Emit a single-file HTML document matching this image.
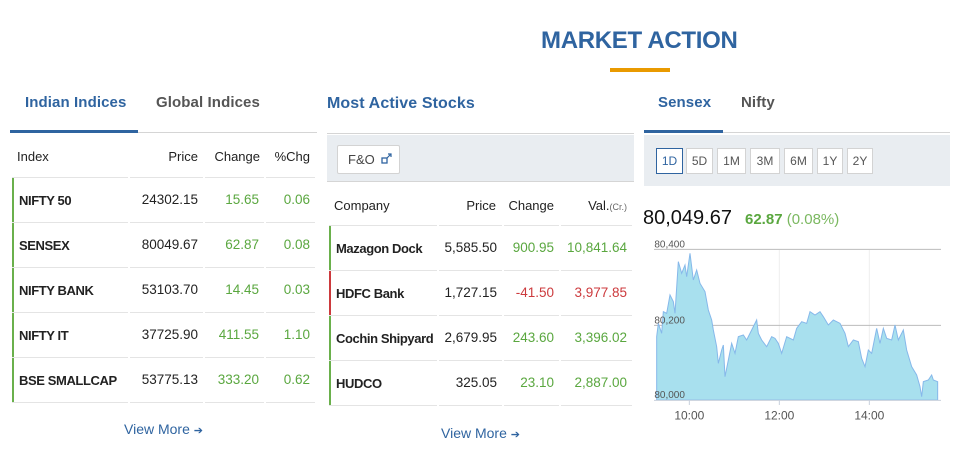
<!DOCTYPE html>
<html><head><meta charset="utf-8"><style>
*{margin:0;padding:0;box-sizing:border-box}
body{width:961px;height:454px;background:#fff;font-family:"Liberation Sans",sans-serif;position:relative;overflow:hidden;color:#222}
.a{position:absolute;white-space:nowrap}
.t{font-size:15px;font-weight:bold;letter-spacing:0.1px}
.bl{color:#2f64a0}
.gy{color:#555}
.h{font-size:13px;color:#222;top:0}
.ln{position:absolute;height:1px;background:#e4e4e4}
.g{color:#5aa73f}.r{color:#cc3a3d}
.n{font-size:13px;font-weight:bold;letter-spacing:-0.4px;color:#222}
.v{font-size:13.5px}
.bar{position:absolute;width:2px}
.btn{position:absolute;top:148px;height:26px;border:1px solid #d3d3d3;background:#fff;font-size:12px;color:#555;text-align:center;line-height:24px}
</style></head><body>
<div class="a bl" style="left:541px;top:27px;font-size:24px;font-weight:bold;letter-spacing:-0.3px">MARKET ACTION</div>
<div class="a" style="left:610px;top:68px;width:60px;height:4px;background:#e99a00"></div>

<div class="a t bl" style="left:25px;top:94px">Indian Indices</div>
<div class="a t gy" style="left:156px;top:94px">Global Indices</div>
<div class="a" style="left:10px;top:132px;width:307px;height:1px;background:#d5d5d5"></div>
<div class="a" style="left:10px;top:130px;width:128px;height:3px;background:#2f64a0"></div>
<div class="a h" style="left:17px;top:149px">Index</div>
<div class="a h" style="left:130px;width:68px;text-align:right;top:149px">Price</div>
<div class="a h" style="left:205px;width:55px;text-align:right;top:149px">Change</div>
<div class="a h" style="left:266px;width:44px;text-align:right;top:149px">%Chg</div>
<div id="L"></div>

<div class="a t bl" style="left:327px;top:95px;font-size:16px">Most Active Stocks</div>
<div class="a" style="left:327px;top:133px;width:307px;height:1px;background:#d5d5d5"></div>
<div class="a" style="left:327px;top:135px;width:307px;height:47px;background:#e9edf1;border-bottom:1px solid #d5d5d5"></div>
<div class="a" style="left:337px;top:145px;width:63px;height:29px;background:#fff;border:1px solid #d3d3d3;border-radius:2px;font-size:13px;color:#444;line-height:27px;padding-left:10px">F&amp;O <svg width="12" height="12" viewBox="0 0 12 12" style="vertical-align:-1px;margin-left:3px"><rect x="1" y="5" width="5" height="5" fill="none" stroke="#2f64a0" stroke-width="1.3"/><path d="M6 5L10 1M7 1h3v3" fill="none" stroke="#2f64a0" stroke-width="1.2"/></svg></div>
<div class="a h" style="left:334px;top:198px">Company</div>
<div class="a h" style="left:439px;width:57px;text-align:right;top:198px">Price</div>
<div class="a h" style="left:504px;width:50px;text-align:right;top:198px">Change</div>
<div class="a h" style="left:561px;width:66px;text-align:right;top:198px">Val.<span style="font-size:9px;color:#666">(Cr.)</span></div>
<div id="M"></div>

<div class="a t bl" style="left:658px;top:94px">Sensex</div>
<div class="a t gy" style="left:741px;top:94px">Nifty</div>
<div class="a" style="left:644px;top:132px;width:306px;height:1px;background:#d5d5d5"></div>
<div class="a" style="left:644px;top:130px;width:79px;height:3px;background:#2f64a0"></div>
<div class="a" style="left:644px;top:135px;width:306px;height:51px;background:#e9edf1"></div>
<div class="btn" style="left:656px;width:27px;border-color:#2f64a0;color:#2f64a0">1D</div>
<div class="btn" style="left:686px;width:27px">5D</div>
<div class="btn" style="left:717px;width:29px">1M</div>
<div class="btn" style="left:750px;width:30px">3M</div>
<div class="btn" style="left:784px;width:29px">6M</div>
<div class="btn" style="left:817px;width:26px">1Y</div>
<div class="btn" style="left:847px;width:26px">2Y</div>
<div class="a" style="left:643px;top:207px;font-size:20px;color:#111">80,049.67</div>
<div class="a g" style="left:745px;top:211px;font-size:15px"><b style="font-weight:bold">62.87</b> <span style="color:#7bb860">(0.08%)</span></div>
<svg class="a" style="left:640px;top:240px" width="321" height="200" viewBox="0 0 963 600">
<line x1="418" y1="30" x2="418" y2="480" stroke="#eee" stroke-width="3"/>
<line x1="688" y1="30" x2="688" y2="480" stroke="#eee" stroke-width="3"/>
<line x1="42" y1="28" x2="903" y2="28" stroke="#bbb" stroke-width="3"/>
<line x1="42" y1="256" x2="903" y2="256" stroke="#bbb" stroke-width="3"/>
<path d="M50 480L50 290L55 250L65 280L70 215L80 220L90 165L100 185L105 220L115 65L125 100L135 75L140 110L150 40L160 120L170 90L180 130L195 155L205 210L215 240L220 270L230 320L235 370L245 330L250 315L255 410L265 360L275 310L285 340L295 290L310 285L320 300L335 270L350 240L355 280L365 300L380 320L395 290L405 295L415 310L425 340L440 290L460 300L470 265L485 245L500 250L510 215L525 225L540 215L550 230L565 255L580 240L600 250L615 280L625 320L640 300L655 305L665 355L675 380L685 330L695 340L710 265L720 310L730 265L740 295L755 300L765 255L775 300L790 270L800 330L815 380L830 405L840 440L845 470L850 425L865 420L875 405L880 420L893 425L893 480Z" fill="#a8e0ee" stroke="#86b8ea" stroke-width="3"/>
<line x1="42" y1="481" x2="903" y2="481" stroke="#c8d0dc" stroke-width="3"/>
<line x1="148" y1="481" x2="148" y2="495" stroke="#c8d0dc" stroke-width="3"/>
<line x1="418" y1="481" x2="418" y2="495" stroke="#c8d0dc" stroke-width="3"/>
<line x1="688" y1="481" x2="688" y2="495" stroke="#c8d0dc" stroke-width="3"/>
<g font-family="Liberation Sans,sans-serif" font-size="30" fill="#555">
<text x="43" y="22">80,400</text><text x="43" y="250">80,200</text><text x="43" y="474">80,000</text>
<text x="148" y="538" text-anchor="middle" font-size="36">10:00</text>
<text x="418" y="538" text-anchor="middle" font-size="36">12:00</text>
<text x="688" y="538" text-anchor="middle" font-size="36">14:00</text>
</g></svg>

<div class="a bl" style="left:124px;top:421px;font-size:14px;color:#2f64a0">View More <span style="font-size:11px">➔</span></div>
<div class="a bl" style="left:441px;top:425px;font-size:14px;color:#2f64a0">View More <span style="font-size:11px">➔</span></div>

<script>
function build(id,cols,y0,rows,nameLeft){var h='';
 cols.forEach(function(c){h+='<div class="ln" style="left:'+c[0]+'px;top:'+y0+'px;width:'+(c[1]-c[0])+'px"></div>';});
 rows.forEach(function(r,i){var top=y0+1+i*45;
  h+='<div class="bar" style="left:'+(cols[0][0])+'px;top:'+top+'px;height:44px;background:'+(r[4]=='r'?'#cc3a3d':'#6ab04c')+'"></div>';
  cols.forEach(function(c){h+='<div class="ln" style="left:'+c[0]+'px;top:'+(top+44)+'px;width:'+(c[1]-c[0])+'px"></div>';});
  var ty=top+14;var cl=r[4]=='r'?'r':'g';
  h+='<div class="a n" style="left:'+nameLeft+'px;top:'+(ty+1)+'px">'+r[0]+'</div>';
  h+='<div class="a v" style="left:'+cols[1][0]+'px;width:'+(cols[1][1]-cols[1][0]-5)+'px;text-align:right;top:'+ty+'px">'+r[1]+'</div>';
  h+='<div class="a v '+cl+'" style="left:'+cols[2][0]+'px;width:'+(cols[2][1]-cols[2][0]-5)+'px;text-align:right;top:'+ty+'px">'+r[2]+'</div>';
  h+='<div class="a v '+cl+'" style="left:'+cols[3][0]+'px;width:'+(cols[3][1]-cols[3][0]-5)+'px;text-align:right;top:'+ty+'px">'+r[3]+'</div>';
 });
 document.getElementById(id).innerHTML=h;}
build('L',[[12,128],[130,203],[205,264],[266,315]],177,[
['NIFTY 50','24302.15','15.65','0.06'],['SENSEX','80049.67','62.87','0.08'],['NIFTY BANK','53103.70','14.45','0.03'],['NIFTY IT','37725.90','411.55','1.10'],['BSE SMALLCAP','53775.13','333.20','0.62']],19);
build('M',[[329,437],[439,502],[504,559],[561,632]],225,[
['Mazagon Dock','5,585.50','900.95','10,841.64'],['HDFC Bank','1,727.15','-41.50','3,977.85','r'],['Cochin Shipyard','2,679.95','243.60','3,396.02'],['HUDCO','325.05','23.10','2,887.00']],336);
</script>
</body></html>
